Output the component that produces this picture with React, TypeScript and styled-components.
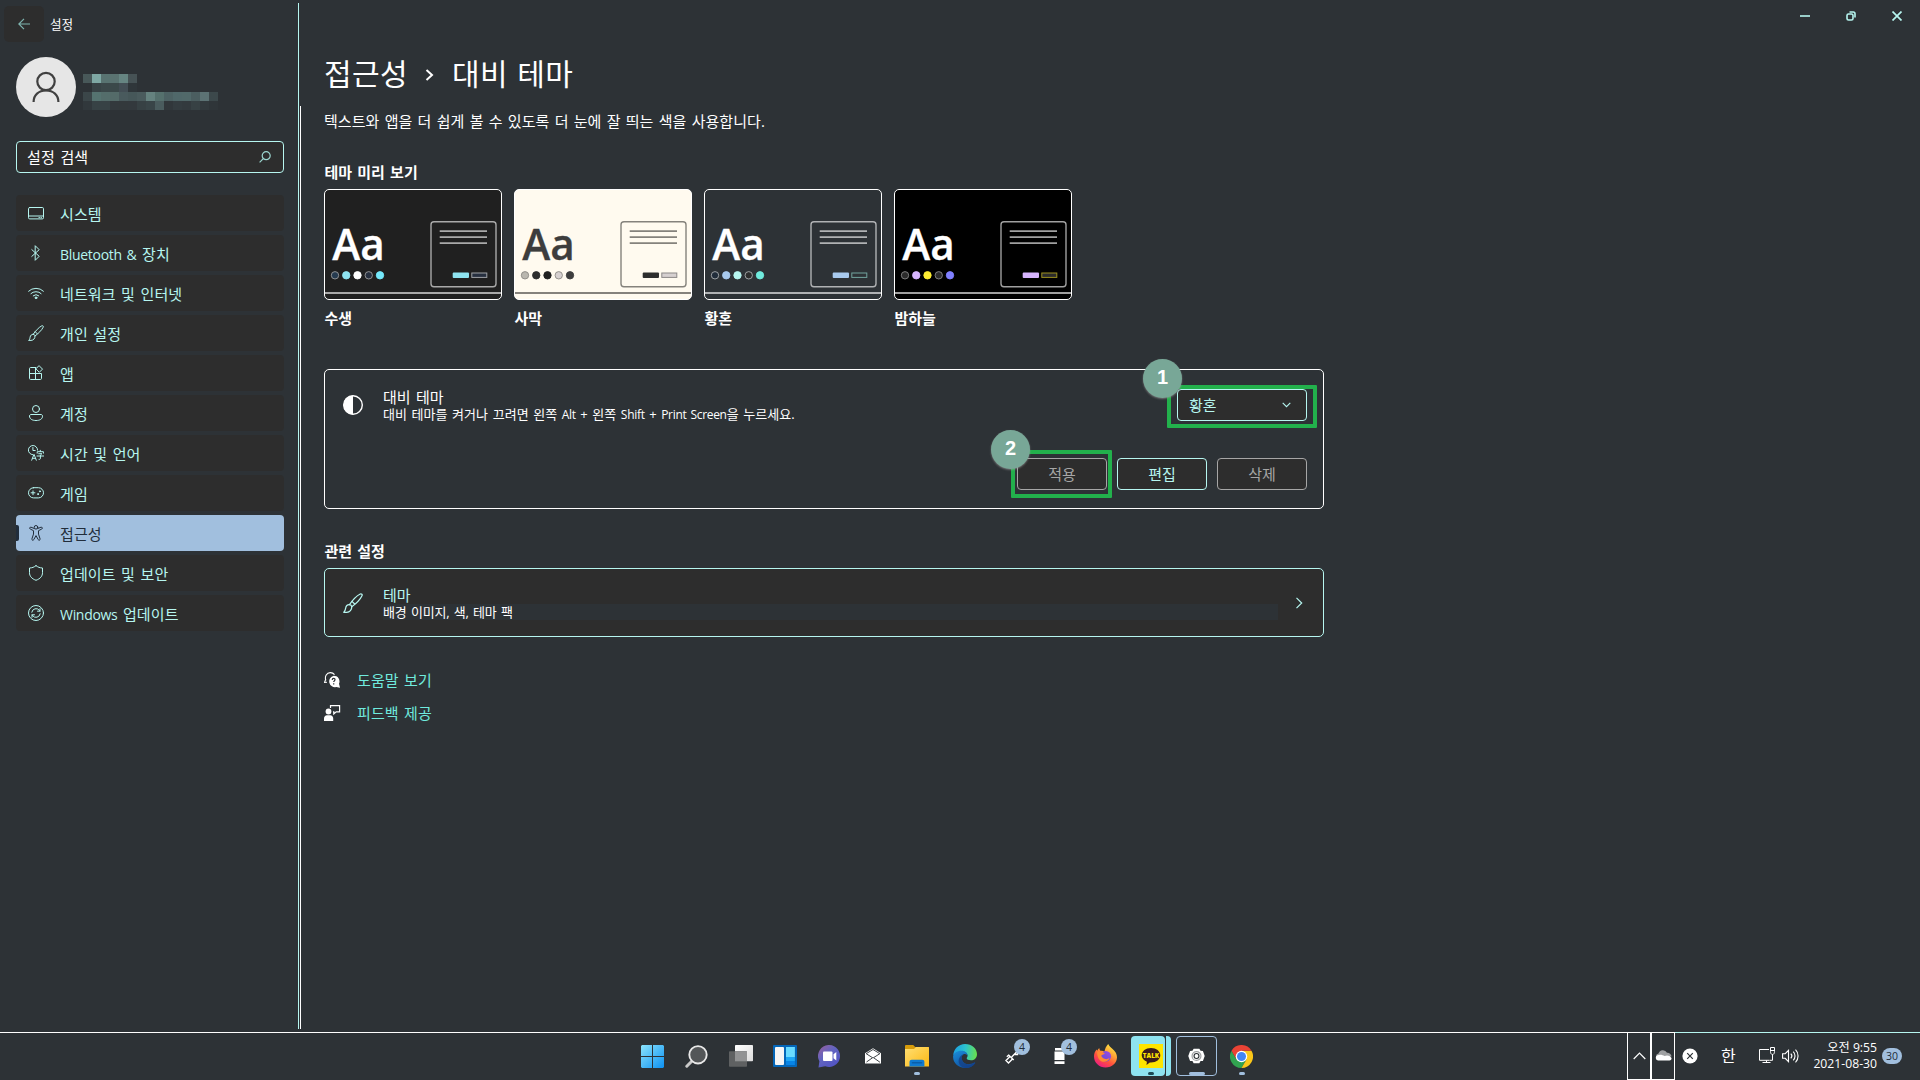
import React from "react";
import styled, { createGlobalStyle } from "styled-components";

const c = {
  window: "#2d3236",
  face: "#2d2d2d",
  mint: "#b6f6f0",
  link: "#70ebde",
  accent: "#a1bfde",
  accentText: "#212d3b",
  white: "#ffffff",
  disabled: "#a6a6a6",
  green: "#22b14c",
  marker: "#78a797",
};

const Global = createGlobalStyle`
  * { box-sizing: border-box; }
  html, body { margin: 0; padding: 0; background: ${c.window}; overflow: hidden; }
  body {
    font-family: "Open Sans", "Noto Sans", "Noto Sans CJK KR", sans-serif;
    font-size: 15px;
    line-height: 20px;
    color: ${c.white};
    white-space: nowrap;
  }
  button { font: inherit; padding: 0; margin: 0; }
  svg { display: block; flex: none; }
`;

const Screen = styled.div`
  width: 1920px;
  height: 1080px;
  display: grid;
  grid-template-rows: 1032px 48px;
  background: ${c.window};
`;

const Window = styled.div`
  display: flex;
  min-height: 0;
`;

const Latin = styled.span<{ $size: number }>`
  font-size: ${(p) => p.$size}px;
  letter-spacing: -0.3px;
`;

/* ---------- sidebar ---------- */

const Sidebar = styled.aside`
  width: 298px;
  flex: none;
`;

const Divider = styled.div`
  width: 1px;
  margin: 3px 0 3px;
  background: ${c.mint};
`;

const PaneEdge = styled.div`
  width: 1px;
  margin: 106px 0 3px 1px;
  background: ${c.white};
`;

const TitleRow = styled.div`
  display: flex;
  align-items: center;
  padding: 6px 0 0 4px;
  gap: 6px;
  font-size: 12.6px;
  span { padding-top: 1px; }
`;

const BackButton = styled.button`
  width: 40px;
  height: 36px;
  border: 0;
  border-radius: 5px;
  background: ${c.face};
  display: grid;
  place-items: center;
`;

const Profile = styled.div`
  display: flex;
  gap: 7px;
  padding: 15px 0 0 16px;
`;

const Avatar = styled.div`
  width: 60px;
  height: 60px;
  border-radius: 50%;
  background: #e6e6e6;
  display: grid;
  place-items: center;
`;

const Mosaic = styled.div`
  display: grid;
  grid-template-columns: repeat(15, 9px);
  grid-auto-rows: 9px;
  padding-top: 17px;
`;

const Cell = styled.i<{ $c: string }>`
  background: ${(p) => p.$c};
`;

const SearchBox = styled.div`
  width: 268px;
  height: 32px;
  margin: 24px 0 22px 16px;
  padding: 0 12px 0 10px;
  display: flex;
  align-items: center;
  justify-content: space-between;
  border: 1px solid ${c.mint};
  border-radius: 4px;
  background: ${c.face};
  letter-spacing: 0.1px;
  word-spacing: 1.6px;
`;

const Nav = styled.nav`
  display: flex;
  flex-direction: column;
  gap: 4px;
  padding-left: 16px;
`;

const NavItem = styled.a<{ $active?: boolean }>`
  width: 268px;
  height: 36px;
  display: flex;
  align-items: center;
  gap: 16px;
  padding-left: ${(p) => (p.$active ? "0" : "12px")};
  padding-bottom: 1px;
  border-radius: 4px;
  background: ${(p) => (p.$active ? c.accent : c.face)};
  color: ${(p) => (p.$active ? c.accentText : c.mint)};
  letter-spacing: 0.1px;
  word-spacing: 1.5px;
`;

const ActivePill = styled.i`
  width: 3px;
  height: 16px;
  margin-right: -7px;
  border-radius: 0 2px 2px 0;
  background: ${c.accentText};
`;

const NavLabel = styled.span`
  padding-top: 3px;
`;

/* ---------- content ---------- */

const Main = styled.main`
  flex: 1;
  display: flex;
  justify-content: space-between;
  padding-left: 23px;
`;

const Content = styled.div`
  width: 1000px;
  display: flex;
  flex-direction: column;
`;

const Breadcrumb = styled.h1`
  margin: 53px 0 0;
  height: 41px;
  display: flex;
  align-items: flex-start;
  font-size: 30px;
  font-weight: 400;
  line-height: 41px;
  letter-spacing: 0.4px;
  word-spacing: 1px;
  svg { margin: 16px 18px 0 17px; }
`;

const Lead = styled.p`
  margin: 17px 0 0;
  height: 20px;
  letter-spacing: 0.05px;
  word-spacing: 1.3px;
`;

const SectionTitle = styled.h2<{ $top: number; $gap: number }>`
  margin: ${(p) => p.$top}px 0 ${(p) => p.$gap}px;
  height: 20px;
  padding-left: 0.5px;
  font-size: 15px;
  font-weight: 700;
  line-height: 20px;
  word-spacing: 1.3px;
`;

const Themes = styled.div`
  display: flex;
  gap: 12px;
`;

const ThemeItem = styled.figure`
  margin: 0;
  width: 178px;
  height: 138px;
`;

const ThemeFrame = styled.div<{ $bg: string }>`
  height: 111px;
  border: 1px solid ${c.white};
  border-radius: 5px;
  overflow: hidden;
  background: ${(p) => p.$bg};
`;

const ThemeName = styled.figcaption`
  margin: 8px 0 0 0.5px;
  font-weight: 700;
`;

const ContrastPanel = styled.section`
  position: relative;
  margin-top: 42px;
  height: 140px;
  padding: 19px 16px 0 18px;
  border: 1px solid ${c.white};
  border-radius: 5px;
`;

const PanelHead = styled.div`
  display: flex;
  height: 32px;
  > svg { margin: 6px 20px 0 0; }
`;

const PanelText = styled.div`
  flex: 1;
  display: flex;
  flex-direction: column;
  font-size: 13px;
  line-height: 16px;
  strong {
    font-size: 15px;
    font-weight: 400;
    line-height: 16px;
    height: 17px;
    word-spacing: 1.4px;
  }
`;

const Hint = styled.span`
  margin-top: 1px;
  letter-spacing: 0.05px;
  word-spacing: 1.1px;
`;

const Select = styled.button`
  width: 130px;
  height: 32px;
  padding: 0 15px 0 11px;
  display: flex;
  align-items: center;
  justify-content: space-between;
  border: 1px solid ${c.mint};
  border-radius: 4px;
  background: ${c.face};
  color: ${c.mint};
`;

const Actions = styled.div`
  display: flex;
  justify-content: flex-end;
  gap: 10px;
  margin-top: 37px;
`;

const Action = styled.button<{ $off?: boolean }>`
  width: 90px;
  height: 32px;
  border: 1px solid ${(p) => (p.$off ? c.disabled : c.mint)};
  border-radius: 4px;
  background: ${c.face};
  color: ${(p) => (p.$off ? c.disabled : c.mint)};
`;

const Highlight = styled.div<{ $x: number; $y: number; $w: number; $h: number }>`
  position: absolute;
  left: ${(p) => p.$x}px;
  top: ${(p) => p.$y}px;
  width: ${(p) => p.$w}px;
  height: ${(p) => p.$h}px;
  border: 4px solid ${c.green};
  border-radius: 1px;
`;

const Marker = styled.div<{ $x: number; $y: number }>`
  position: absolute;
  left: ${(p) => p.$x}px;
  top: ${(p) => p.$y}px;
  width: 39px;
  height: 39px;
  border-radius: 50%;
  background: ${c.marker};
  box-shadow: 0 1px 2px rgba(160, 160, 160, 0.6);
  font: 700 20px/37px "Liberation Sans", Arial, sans-serif;
  text-align: center;
`;

const RelatedPanel = styled.a`
  height: 69px;
  padding: 18px 18px 0;
  display: flex;
  border: 1px solid ${c.mint};
  border-radius: 5px;
  background: ${c.face};
  > svg:first-child { margin: 6px 20px 0 0; }
  > svg:last-child { margin: 10px 0 0 15px; }
  strong { color: ${c.mint}; }
`;

const Strip = styled.span`
  background: ${c.window};
  height: 16px;
  line-height: 17px;
  word-spacing: 1.2px;
  letter-spacing: -0.2px;
`;

const Links = styled.div`
  display: flex;
  flex-direction: column;
  gap: 13px;
  margin-top: 33px;
`;

const LinkRow = styled.a`
  display: flex;
  align-items: center;
  height: 20px;
  gap: 16px;
  color: ${c.link};
  letter-spacing: 0.1px;
  word-spacing: 1.3px;
`;

const Caption = styled.div`
  display: flex;
  height: 32px;
  button {
    width: 46px;
    height: 32px;
    display: grid;
    place-items: center;
    border: 0;
    background: transparent;
  }
`;

/* ---------- taskbar ---------- */

const Taskbar = styled.footer`
  display: flex;
  height: 48px;
`;

const AppStrip = styled.div`
  width: 1627px;
  display: flex;
  padding-left: 630px;
  border-top: 1px solid ${c.white};
`;

const Slot = styled.div<{ $w: number }>`
  position: relative;
  width: ${(p) => p.$w}px;
  height: 46px;
  display: grid;
  place-items: center;
`;

const Running = styled.i<{ $w?: number; $dark?: boolean; $b?: number }>`
  position: absolute;
  left: 50%;
  bottom: ${(p) => p.$b ?? 4}px;
  width: ${(p) => p.$w ?? 6}px;
  height: 3px;
  transform: translateX(-50%);
  border-radius: 2px;
  background: ${(p) => (p.$dark ? "#1c4a55" : c.accent)};
`;

const Badge = styled.span`
  position: absolute;
  right: 6px;
  top: 6px;
  width: 16px;
  height: 16px;
  border-radius: 50%;
  background: ${c.accent};
  color: ${c.accentText};
  font-size: 10.5px;
  line-height: 16px;
  text-align: center;
`;

const KakaoTile = styled.div`
  width: 40px;
  height: 40px;
  display: grid;
  grid-template-columns: 34px 5px;
  gap: 1px;
`;

const KakaoFront = styled.div`
  height: 40px;
  display: grid;
  place-items: center end;
  padding-right: 2px;
  border-radius: 4px;
  background: #8ee3f0;
`;

const StackEdge = styled.i`
  height: 40px;
  border-radius: 0 4px 4px 0;
  background: #8ee3f0;
`;

const TalkIcon = styled.div`
  width: 24px;
  height: 24px;
  background: #fee500;
`;

const SettingsTile = styled.div`
  position: relative;
  width: 41px;
  height: 40px;
  display: grid;
  place-items: center;
  border: 1px solid ${c.accent};
  border-radius: 4px;
`;

const TrayCell = styled.div<{ $w: number }>`
  width: ${(p) => p.$w}px;
  height: 48px;
  padding-bottom: 1px;
  display: grid;
  place-items: center;
  border: 1px solid ${c.white};
`;

const Tray = styled.div`
  flex: 1;
  display: flex;
  align-items: center;
  padding: 0 0 2px 7px;
  border-top: 1px solid ${c.mint};
`;

const Ime = styled.span`
  width: 16px;
  margin: 0 22px 0 23px;
  font-size: 16px;
`;

const Speaker = styled.svg`
  margin-left: 7px;
`;

const Clock = styled.div`
  width: 78px;
  text-align: right;
  font-size: 12.2px;
  line-height: 16px;
  letter-spacing: 0;
`;

const CountPill = styled.span`
  width: 20px;
  height: 16px;
  margin-left: 5px;
  border-radius: 8px;
  background: ${c.accent};
  color: ${c.accentText};
  font-size: 10.5px;
  line-height: 16px;
  text-align: center;
`;

/* ---------- icons ---------- */

type IconProps = { size?: number; color?: string; children: React.ReactNode };
const Line = ({ size = 16, color = "currentColor", children }: IconProps) => (
  <svg width={size} height={size} viewBox="0 0 16 16" fill="none" stroke={color} strokeWidth="1" strokeLinejoin="round" strokeLinecap="round">
    {children}
  </svg>
);

const Brush = ({ size = 16, color }: { size?: number; color?: string }) => (
  <Line size={size} color={color}>
    <path d="M5.2 9.3C7.6 5.8 11 2.2 13.8.8c1-.4 1.9.4 1.4 1.4-1.4 2.9-4.9 6.400-8.200 8.800" />
    <path d="M5.2 9.3c1.2.1 1.7.7 1.8 1.700.1 2.400-1.600 4.400-4 4.400H.6c1.200-.8 1.300-1.800 1.500-3.200.3-1.800 1.400-3 3.100-2.900zM7.200 6.700l2.100 2.100" />
  </Line>
);

const navIcons: Record<string, React.ReactNode> = {
  system: <Line><rect x=".5" y="2.5" width="15" height="11.400" rx="1.200" /><path d="M.5 11h15M11 12.500h.4M13 12.500h.4" /></Line>,
  bluetooth: <Line><path d="M3.800 4.600l7.400 6.700-4 4V.7l4 4-7.400 6.700" /></Line>,
  wifi: (
    <Line>
      <path d="M.6 6.200a10.600 10.600 0 0 1 14.800 0M2.900 8.600a7.400 7.400 0 0 1 10.200 0M5.200 10.800a4.200 4.200 0 0 1 5.600 0" />
      <circle cx="8" cy="12.800" r=".9" fill="currentColor" />
    </Line>
  ),
  brush: <Brush />,
  apps: <Line><path d="M7.800 2.500H2.600c-.6 0-1.100.5-1.100 1.100v9.800c0 .6.5 1.100 1.100 1.100h9.800c.6 0 1.100-.5 1.100-1.100V8.500h-12M7.500 2.500v12" /><path d="M11.300.9l3.200 3.200-3.200 3.200-3.100-3.200z" /></Line>,
  account: <Line><circle cx="8" cy="4" r="3.500" /><path d="M1.500 11.200c0-1 .6-1.700 1.500-1.700h10c.9 0 1.500.7 1.500 1.700 0 2.800-2.600 4.300-6.500 4.300s-6.500-1.500-6.500-4.300z" /></Line>,
  time: (
    <Line>
      <path d="M9.600 5.100a4.600 4.600 0 1 0-5 4.600M4.900 2.500v3h2.300" />
      <path d="M3.700 15.200L6 9.300l2.300 5.900M4.500 13.300h3" />
      <path d="M12.300 5.300v1.200M9.200 8.200V6.700h6.200v1.500M10.700 8.700h3.200l-1.500 1.400v3.400c0 .8-.5 1-1.400.9M9 11h6.700" />
    </Line>
  ),
  game: (
    <Line>
      <rect x=".5" y="2.700" width="15" height="10.200" rx="5.100" />
      <path d="M5 5.900v3.800M3.100 7.800h3.800" />
      <circle cx="11.900" cy="6.300" r=".5" fill="currentColor" /><circle cx="10" cy="9.100" r=".5" fill="currentColor" />
    </Line>
  ),
  access: (
    <Line>
      <circle cx="8" cy="2.300" r="1.800" />
      <path d="M6.200 3.500L3 2.200c-1.300-.3-1.900 1.200-.8 1.800l3.300 1.700v3.400l-1.600 4.800c-.3 1.300 1.300 1.900 1.900.7L8 10.600l2.200 4c.6 1.200 2.200.6 1.900-.7l-1.600-4.800V5.700L13.800 4c1.100-.6.5-2.100-.8-1.800L9.800 3.500" />
    </Line>
  ),
  shield: <Line><path d="M8 .7c1.900 1.500 4 2.200 6.500 2.300v4.700c0 3.500-2.200 6-6.500 7.600-4.300-1.600-6.500-4.100-6.500-7.600V3C4 2.900 6.100 2.200 8 .7z" /></Line>,
  update: (
    <Line>
      <circle cx="8" cy="8" r="7.500" />
      <path d="M3.800 7.200a4.300 4.300 0 0 1 7.600-1.900l.6.800M12 3.700v2.500H9.500M12.200 8.800a4.300 4.300 0 0 1-7.600 1.900l-.6-.8M4 12.300V9.800h2.500" />
    </Line>
  ),
};

const navItems: [string, React.ReactNode][] = [
  ["system", "시스템"],
  ["bluetooth", <><Latin $size={14}>Bluetooth &amp;</Latin> 장치</>],
  ["wifi", "네트워크 및 인터넷"],
  ["brush", "개인 설정"],
  ["apps", "앱"],
  ["account", "계정"],
  ["time", "시간 및 언어"],
  ["game", "게임"],
  ["access", "접근성"],
  ["shield", "업데이트 및 보안"],
  ["update", <><Latin $size={14}>Windows</Latin> 업데이트</>],
];

const mosaic = [
  "#485859 #7ea8a4 #587371 #5a7371 #668582 #465255 - - - - - - - - -",
  "- #384346 #3b484a #3b494a #434e55 #2f363a - - - - - - - - -",
  "#3b4649 #557370 #546d6b #546b69 #495a5d #465759 #4a5b5d #65827f #55706d #4d6264 #50686a #51696a #4b5e60 #5c7274 #3c484b",
  "#31383c #374245 #374245 #33393d #33393c #33393d #374144 #394548 #4a5c5e #31373b #343c40 #333a3e #374144 #32393d #2f3539",
];

type Theme = { name: string; bg: string; fg: string; line: string; dots: string[]; ring: string; primary: string; second: string; secondLine: string };
const themes: Theme[] = [
  { name: "수생", bg: "#202020", fg: "#ffffff", line: "#a9a9a9", ring: "#9a9a9a", dots: ["#263b50", "#8ee3f0", "#ffffff", "#262f3f", "#75e9fc"], primary: "#8ee3f0", second: "#262f3f", secondLine: "#a0a3a8" },
  { name: "사막", bg: "#fffaef", fg: "#3d3d3d", line: "#85827c", ring: "#8c8a85", dots: ["#bab7af", "#2d2d2d", "#202020", "#d6d0d0", "#3d3d3d"], primary: "#2d2d2d", second: "#d6d0d0", secondLine: "#8b8887" },
  { name: "황혼", bg: "#2d3236", fg: "#ffffff", line: "#b0b2b4", ring: "#a9adaf", dots: ["#212d3b", "#a8caee", "#b6f6f0", "#2d2d2d", "#70ebde"], primary: "#a8caee", second: "#2d3236", secondLine: "#72a39e" },
  { name: "밤하늘", bg: "#000000", fg: "#ffffff", line: "#a0a0a0", ring: "#868686", dots: ["#2b2b2b", "#d6b4fd", "#ffee32", "#2b2b2b", "#8080ff"], primary: "#d6b4fd", second: "#2b2b2b", secondLine: "#9b8f20" },
];

const ThemeArt = ({ t }: { t: Theme }) => (
  <svg width="176" height="109" viewBox="1 1 176 109">
    <text x="8.200" y="71.300" fill={t.fg} stroke={t.fg} strokeWidth="0.300" fontFamily="Open Sans" fontWeight="600" fontSize="43.500" textLength="52.500" lengthAdjust="spacingAndGlyphs">Aa</text>
    {t.dots.map((d, i) => {
      const plain = i === 1 || i === 2 || i === 4;
      return <circle key={i} cx={11 + i * 11.25} cy="86.300" r="3.700" fill={d} stroke={plain ? d : t.ring} strokeWidth="0.900" />;
    })}
    <rect x="107" y="32.800" width="65" height="65" rx="3" fill="none" stroke={t.line} strokeWidth="1.400" />
    <path d="M115.700 42.200H163M115.700 48.200H163M115.700 54.200H163" stroke={t.line} strokeWidth="1.800" />
    <rect x="128.700" y="83.500" width="16.300" height="5.400" rx="1" fill={t.primary} />
    <rect x="147.800" y="84" width="15" height="4.400" fill={t.second} stroke={t.secondLine} />
    <path d="M0 104H178" stroke={t.line} strokeWidth="2" />
  </svg>
);

/* ---------- taskbar logos ---------- */

const WindowsLogo = () => (
  <svg width="23" height="23" viewBox="0 0 23 23">
    <defs><linearGradient id="win" x1="0" y1="0" x2="1" y2="1"><stop offset="0" stopColor="#8be4fd" /><stop offset="1" stopColor="#0d91f2" /></linearGradient></defs>
    <path fill="url(#win)" d="M1 0h10v11H0V1zM12 0h10l1 1v10H12zM0 12h11v11H1l-1-1zM12 12h11v10l-1 1H12z" />
  </svg>
);

const SearchLogo = () => (
  <svg width="23" height="23" viewBox="0 0 23 23">
    <path d="M7.500 15.500L1.800 21.200" stroke="#c9c9c9" strokeWidth="3" strokeLinecap="round" />
    <circle cx="13" cy="9.800" r="8.700" fill="#535658" stroke="#e8e8e8" strokeWidth="1.900" />
  </svg>
);

const TaskViewLogo = () => (
  <svg width="24" height="23" viewBox="0 0 24 23">
    <defs><linearGradient id="tv" x1="0" y1="0" x2="1" y2="1"><stop offset="0" stopColor="#ffffff" /><stop offset="1" stopColor="#dcdcdc" /></linearGradient></defs>
    <rect x="6" y="0" width="18" height="16.300" rx=".8" fill="url(#tv)" />
    <rect x="0" y="6.300" width="18" height="15.500" rx=".8" fill="#5f6162" />
    <path d="M6 6.300h12v10H6z" fill="#929394" />
  </svg>
);

const WidgetsLogo = () => (
  <svg width="24" height="22" viewBox="0 0 24 22">
    <rect width="24" height="22" rx="1" fill="#0466b8" />
    <rect x="2" y="2" width="9" height="18" rx="1" fill="#f5f5f5" />
    <path d="M13 2h8.900v10H13z" fill="#69dbff" /><path d="M13 12h8.900v4H13z" fill="#1ea7f5" /><path d="M13 16h8.900v4H13z" fill="#0784e6" />
  </svg>
);

const ChatLogo = () => (
  <svg width="23" height="23" viewBox="0 0 23 23">
    <defs><linearGradient id="chat" x1="0" y1="0" x2=".8" y2="1"><stop offset="0" stopColor="#9b5f9c" /><stop offset=".45" stopColor="#6264c0" /><stop offset="1" stopColor="#4f52c4" /></linearGradient></defs>
    <path d="M11.500 0a11 11 0 1 1-4.300 21.300L.5 22.500l.9-6.200A11 11 0 0 1 11.500 0z" fill="url(#chat)" />
    <rect x="5" y="6.500" width="9.500" height="9.500" rx="1" fill="#fff" />
    <path d="M18.300 7v8.500l-2.800-2.300V9.300z" fill="#fff" />
  </svg>
);

const MailLogo = () => (
  <svg width="16" height="16" viewBox="0 0 16 16">
    <path d="M0 5.200L8 .2l8 5V15.500H0z" fill="#fff" />
    <path d="M1.200 5.700L8 1.500l6.800 4.200L8 10zM1.500 14l5.700-4M9 10l6 4.300" fill="none" stroke="#2d3236" strokeWidth=".9" />
  </svg>
);

const FolderLogo = () => (
  <svg width="24" height="22" viewBox="0 0 24 22">
    <defs><linearGradient id="fold" x1="0" y1="0" x2="1" y2="1"><stop offset="0" stopColor="#ffdf73" /><stop offset="1" stopColor="#fcb813" /></linearGradient></defs>
    <path d="M0 1.200C0 .5.5 0 1.200 0h7l2 2h12.600c.7 0 1.200.4 1.200 1V8H0z" fill="#d79c0b" />
    <path d="M0 4h9l2-2h12c.6 0 1 .4 1 1v18.500H0z" fill="url(#fold)" />
    <path d="M4.500 21.500V17c0-1.400.9-2.300 2.200-2.300h10.500c1.300 0 2.200.9 2.200 2.300v4.500z" fill="#0f7ad0" /><path d="M7.500 17.800h9" stroke="#0a5ea8" strokeWidth="1.600" strokeLinecap="round" />
  </svg>
);

const EdgeLogo = () => (
  <svg width="24" height="24" viewBox="0 0 24 24">
    <defs>
      <linearGradient id="eg1" x1="0" y1=".3" x2="1" y2=".4"><stop offset="0" stopColor="#1b9de2" /><stop offset=".5" stopColor="#2cc3d0" /><stop offset="1" stopColor="#67e04f" /></linearGradient>
      <linearGradient id="eg2" x1="0" y1="0" x2=".6" y2="1"><stop offset="0" stopColor="#1b8fdc" /><stop offset="1" stopColor="#0f4f9e" /></linearGradient>
    </defs>
    <path d="M.2 11.500C.6 5 5.600 0 12 0c7 0 12 4.700 12 10.200 0 3.700-2.700 6.100-6 6.100-2.800 0-4.300-1-4.300-2 0-.7.9-1 .9-2.700 0-2-2-4.200-5.400-4.200C5.200 7.400 1.400 9.500.2 11.500z" fill="url(#eg1)" />
    <path d="M.1 12.600C.3 9.300 4 6.700 8.200 6.700c3.500 0 6.200 1.900 6.300 4.700-1-1-2.200-1.400-3.300-1.300-2.600.8-3.500 4.400-1.600 7.200 2 3 6.500 4.300 11.800 1.300.5-.3 1 .1.700.6A12 12 0 0 1 12 24C5.300 24-.2 18.900.1 12.600z" fill="url(#eg2)" />
    <path d="M8.700 22.800C3.700 19.500 5 12 10.700 9.900c-2.700 2-2.700 6.200.3 8.900 2.900 2.400 6.900 2 10.400-.1.500-.3 1 .1.700.6C19.600 23.300 13.500 25.500 8.700 22.800z" fill="#143f86" opacity=".75" />
  </svg>
);

const ToolLogo = () => (
  <svg width="16" height="16" viewBox="0 0 16 16" fill="none" stroke="#fff" strokeWidth="1.400">
    <path d="M15 .5L6.700 9M12.500 3v3.500H9.800M3.300 6.800l5.400 5.200M5 8.500l-4 4 2.500 2.500 4.200-4.200M1.800 8.800l2.400-2" />
  </svg>
);

const JarLogo = () => (
  <svg width="16" height="17" viewBox="0 0 16 17">
    <path d="M3 0h8v2.500H3zM2.500 3.500h10V12h-10zM2.500 13.300h10V16h-10z" fill="#fff" />
  </svg>
);

const FirefoxLogo = () => (
  <svg width="23" height="24" viewBox="0 0 23 24">
    <defs>
      <linearGradient id="ff" x1=".8" y1="0" x2=".2" y2="1"><stop offset="0" stopColor="#fff044" /><stop offset=".35" stopColor="#ffa436" /><stop offset=".65" stopColor="#ff4f3e" /><stop offset="1" stopColor="#e8158d" /></linearGradient>
      <linearGradient id="ffg" x1="1" y1="0" x2="0" y2="1"><stop offset="0" stopColor="#a04be0" /><stop offset="1" stopColor="#5b4bd8" /></linearGradient>
    </defs>
    <path d="M14.200 0c1 2.400 2.700 3.300 4.100 4.800C21.400 7.500 23 10.200 23 13.200 23 18.800 18 23.500 11.600 23.500S0 18.800 0 12.500C0 9.700 1 7.300 2.600 5.500l.7 1.300c.4-1.100 1.100-2.100 2-2.700 0 1.100.5 2.200 1.200 2.700 1.500-.3 3 .2 4 .9C10.800 5 12.200 2 14.200 0z" fill="url(#ff)" />
    <circle cx="11.800" cy="12.200" r="5.300" fill="url(#ffg)" />
    <path d="M3.300 7.600c3.200-.5 5.800.2 7.600 2.200-1.700.5-3.200 1.200-3.700 2 1.600 3.100 5 4.400 8.400 2.300-1.600 4.400-8 5-10.800.8C3.300 12.700 3 10 3.300 7.600z" fill="#ff8a32" />
  </svg>
);

const ChromeLogo = () => (
  <svg width="23" height="23" viewBox="0 0 24 24">
    <path d="M12 12l5.200 3L12 24A12 12 0 0 1 1.600 6L6.800 15z" fill="#31a350" />
    <path d="M12 6h10.400A12 12 0 0 1 12 24l5.200-9z" fill="#fbc719" />
    <path d="M12 12H8.500L6.800 15 1.600 6A12 12 0 0 1 22.400 6H12z" fill="#ea4335" />
    <circle cx="12" cy="12" r="6" fill="#fff" /><circle cx="12" cy="12" r="4.700" fill="#4285f4" />
  </svg>
);

const Gear = () => (
  <svg width="17" height="18" viewBox="0 0 18 18">
    <path d="M6 1.200h6l1.300 2.300 2.500.1L17.700 9l-1.900 5.300-2.500.1L12 16.800H6l-1.300-2.400-2.500-.1L.3 9l1.900-5.400 2.500-.1z" fill="#fff" />
    <circle cx="9" cy="9" r="4.700" fill="none" stroke="#9a9c9e" strokeWidth="1.200" /><circle cx="9" cy="9" r="2.600" fill="#fff" stroke="#2d3236" strokeWidth="1.200" />
  </svg>
);

export default function App() {
  return (
    <Screen>
      <Global />
      <Window>
        <Sidebar>
          <TitleRow>
            <BackButton>
              <svg width="12" height="12" viewBox="0 0 12 12" fill="none" stroke="#7fb5b0" strokeWidth="1.200"><path d="M6 .8L.8 6 6 11.200M.8 6H12" /></svg>
            </BackButton>
            <span>설정</span>
          </TitleRow>
          <Profile>
            <Avatar>
              <svg width="28" height="32" viewBox="0 0 28 32" fill="none" stroke="#404040" strokeWidth="2.200">
                <circle cx="14" cy="10.500" r="8.700" /><path d="M1.600 31c0-7 5-11.500 12.400-11.500S26.400 24 26.400 31" />
              </svg>
            </Avatar>
            <Mosaic>
              {mosaic.flatMap((row, r) => row.split(" ").map((v, i) => <Cell key={`${r}-${i}`} $c={v === "-" ? "transparent" : v} />))}
            </Mosaic>
          </Profile>
          <SearchBox>
            설정 검색
            <svg width="12" height="12" viewBox="0 0 12 12" fill="none" stroke="#9bd6d0" strokeWidth="1.200"><circle cx="7.200" cy="4.700" r="4" /><path d="M4.300 7.600L.6 11.400" /></svg>
          </SearchBox>
          <Nav>
            {navItems.map(([icon, label]) => (
              <NavItem key={icon} $active={icon === "access"}>
                {icon === "access" && <ActivePill />}
                {navIcons[icon]}
                <NavLabel>{label}</NavLabel>
              </NavItem>
            ))}
          </Nav>
        </Sidebar>
        <Divider />
        <PaneEdge />
        <Main>
          <Content>
            <Breadcrumb>
              접근성
              <svg width="9" height="12" viewBox="0 0 9 12" fill="none" stroke="#fff" strokeWidth="2"><path d="M1.500 1l5.500 5-5.500 5" /></svg>
              대비 테마
            </Breadcrumb>
            <Lead>텍스트와 앱을 더 쉽게 볼 수 있도록 더 눈에 잘 띄는 색을 사용합니다.</Lead>
            <SectionTitle $top={31} $gap={7}>테마 미리 보기</SectionTitle>
            <Themes>
              {themes.map((t) => (
                <ThemeItem key={t.name}>
                  <ThemeFrame $bg={t.bg}><ThemeArt t={t} /></ThemeFrame>
                  <ThemeName>{t.name}</ThemeName>
                </ThemeItem>
              ))}
            </Themes>
            <ContrastPanel>
              <PanelHead>
                <svg width="20" height="20" viewBox="0 0 20 20"><circle cx="10" cy="10" r="9.300" fill="none" stroke="#fff" strokeWidth="1.400" /><path d="M10 .5a9.500 9.500 0 0 0 0 19z" fill="#fff" /></svg>
                <PanelText>
                  <strong>대비 테마</strong>
                  <Hint>
                    대비 테마를 켜거나 끄려면 왼쪽 <Latin $size={12}>Alt</Latin> + 왼쪽 <Latin $size={12}>Shift</Latin> + <Latin $size={12}>Print Screen</Latin>을 누르세요.
                  </Hint>
                </PanelText>
                <Select>
                  황혼
                  <svg width="9" height="6" viewBox="0 0 9 6" fill="none" stroke={c.mint} strokeWidth="1.100"><path d="M.7.9l3.800 3.800L8.300.9" /></svg>
                </Select>
              </PanelHead>
              <Actions>
                <Action $off>적용</Action>
                <Action>편집</Action>
                <Action $off>삭제</Action>
              </Actions>
              <Highlight $x={842} $y={15} $w={150} $h={43} />
              <Highlight $x={686} $y={80} $w={101} $h={48} />
              <Marker $x={818} $y={-11}>1</Marker>
              <Marker $x={666} $y={60}>2</Marker>
            </ContrastPanel>
            <SectionTitle $top={32} $gap={7}>관련 설정</SectionTitle>
            <RelatedPanel>
              <Brush size={20} color={c.mint} />
              <PanelText>
                <strong>테마</strong>
                <Strip>배경 이미지, 색, 테마 팩</Strip>
              </PanelText>
              <svg width="12" height="12" viewBox="0 0 12 12" fill="none" stroke={c.mint} strokeWidth="1.200"><path d="M3.500.8L8.700 6l-5.200 5.200" /></svg>
            </RelatedPanel>
            <Links>
              <LinkRow>
                <svg width="17" height="16" viewBox="0 0 17 16">
                  <path d="M1.800 8.500C.5 4.300 2.700.6 6.300.6c2 0 3.300.7 4.200 2M1.800 7L.5 10.500l2.500-.3" fill="none" stroke="#fff" strokeWidth="1.100" />
                  <path d="M9.700 3.700a5.700 5.700 0 0 1 5.300 8l1 4-3.700-.7A5.700 5.700 0 1 1 9.700 3.700z" fill="#fff" />
                  <path d="M8.200 8c0-2.200 3-2 2.800-.2-.1 1-1.300 1.100-1.300 2.300M9.700 11.200v1.300" fill="none" stroke="#2d3236" strokeWidth="1.200" />
                </svg>
                도움말 보기
              </LinkRow>
              <LinkRow>
                <svg width="17" height="16" viewBox="0 0 17 16">
                  <circle cx="4.500" cy="6.500" r="2.900" fill="#fff" /><path d="M0 16v-2.500c0-2 1.200-3.300 3-3.300h3.200c1.800 0 3 1.300 3 3.300V16z" fill="#fff" />
                  <path d="M6.500 3V.6h9.100v6.200h-3.400L9.800 9V6.800H9" fill="none" stroke="#fff" strokeWidth="1.200" />
                </svg>
                피드백 제공
              </LinkRow>
            </Links>
          </Content>
          <Caption>
            <button><svg width="10" height="10" viewBox="0 0 10 10"><path d="M0 5h10" stroke={c.mint} strokeWidth="1.600" /></svg></button>
            <button><svg width="10" height="10" viewBox="0 0 10 10" fill="none" stroke={c.mint} strokeWidth="1.600"><rect x="1" y="3" width="6" height="6" rx="1.500" /><path d="M3.500 1h3.800C8.300 1 9 1.700 9 2.700v3.800" /></svg></button>
            <button><svg width="10" height="10" viewBox="0 0 10 10"><path d="M.5.5l9 9M9.500.5l-9 9" stroke={c.mint} strokeWidth="1.700" /></svg></button>
          </Caption>
        </Main>
      </Window>
      <Taskbar>
        <AppStrip>
          <Slot $w={45}><WindowsLogo /></Slot>
          <Slot $w={43}><SearchLogo /></Slot>
          <Slot $w={45}><TaskViewLogo /></Slot>
          <Slot $w={44}><WidgetsLogo /></Slot>
          <Slot $w={44}><ChatLogo /></Slot>
          <Slot $w={44}><MailLogo /></Slot>
          <Slot $w={44}><FolderLogo /><Running /></Slot>
          <Slot $w={51}><EdgeLogo /></Slot>
          <Slot $w={46}><ToolLogo /><Badge>4</Badge></Slot>
          <Slot $w={47}><JarLogo /><Badge>4</Badge></Slot>
          <Slot $w={45}><FirefoxLogo /></Slot>
          <Slot $w={46}>
            <KakaoTile>
              <KakaoFront>
                <TalkIcon>
                  <svg width="24" height="24" viewBox="0 0 24 24">
                    <path d="M12 4c5.300 0 9.300 3.200 9.300 7.300s-4 7.200-9.300 7.200l-1.200-.1L7.500 21l.4-3.300C4.700 16.500 2.700 14 2.700 11.300 2.700 7.200 6.700 4 12 4z" fill="#3a1d1d" />
                    <text x="12" y="13.800" fill="#fee500" fontFamily="Open Sans" fontWeight="800" fontSize="6.300" textAnchor="middle">TALK</text>
                  </svg>
                </TalkIcon>
              </KakaoFront>
              <StackEdge />
            </KakaoTile>
            <Running $dark />
          </Slot>
          <Slot $w={45}><SettingsTile><Gear /><Running $w={16} $b={0} /></SettingsTile></Slot>
          <Slot $w={45}><ChromeLogo /><Running /></Slot>
        </AppStrip>
        <TrayCell $w={24}>
          <svg width="13" height="8" viewBox="0 0 13 8" fill="none" stroke="#fff" strokeWidth="1.200"><path d="M.7 7l5.800-5.800L12.300 7" /></svg>
        </TrayCell>
        <TrayCell $w={24}>
          <svg width="17" height="11" viewBox="0 0 17 11">
            <path d="M1 6.500a3 3 0 0 1 2.500-3A4.600 4.600 0 0 1 12 2.800 4 4 0 0 1 16.500 6.500z" fill="#9fa1a3" /><path d="M3 10.500a2.700 2.700 0 0 1-.5-5.200C5 4 8 5 9.500 6c2-1 5.500-1 7 2 .3 1.500-.7 2.500-2 2.500z" fill="#fff" />
          </svg>
        </TrayCell>
        <Tray>
          <svg width="16" height="16" viewBox="0 0 16 16"><circle cx="8" cy="8" r="7.600" fill="#fff" /><path d="M5.200 5.200l5.600 5.600M10.800 5.200l-5.600 5.600" stroke="#2d3236" strokeWidth="1.200" /></svg>
          <Ime>한</Ime>
          <svg width="16" height="17" viewBox="0 0 16 17" fill="none" stroke="#fff"><path d="M10 2.500H.5v10.800h9.800M3.500 15.500h8M7.500 13.300v2.200M10.500 13.300h3V7.500M11.500.5h4v4c0 1.700-.7 3-2 3s-2-1.300-2-3zM11.500 3.500h4" /></svg>
          <Speaker width="17" height="14" viewBox="0 0 17 14" fill="none" stroke="#fff" strokeWidth="1.100"><path d="M.6 4.700v4.600h2.600l3.300 3.300V1.400L3.200 4.700zM8.800 4.700a3.300 3.300 0 0 1 0 4.600M11.200 2.700a6 6 0 0 1 0 8.600M13.500.7a9 9 0 0 1 0 12.600" /></Speaker>
          <Clock>오전 9:55<br />2021-08-30</Clock>
          <CountPill>30</CountPill>
        </Tray>
      </Taskbar>
    </Screen>
  );
}
